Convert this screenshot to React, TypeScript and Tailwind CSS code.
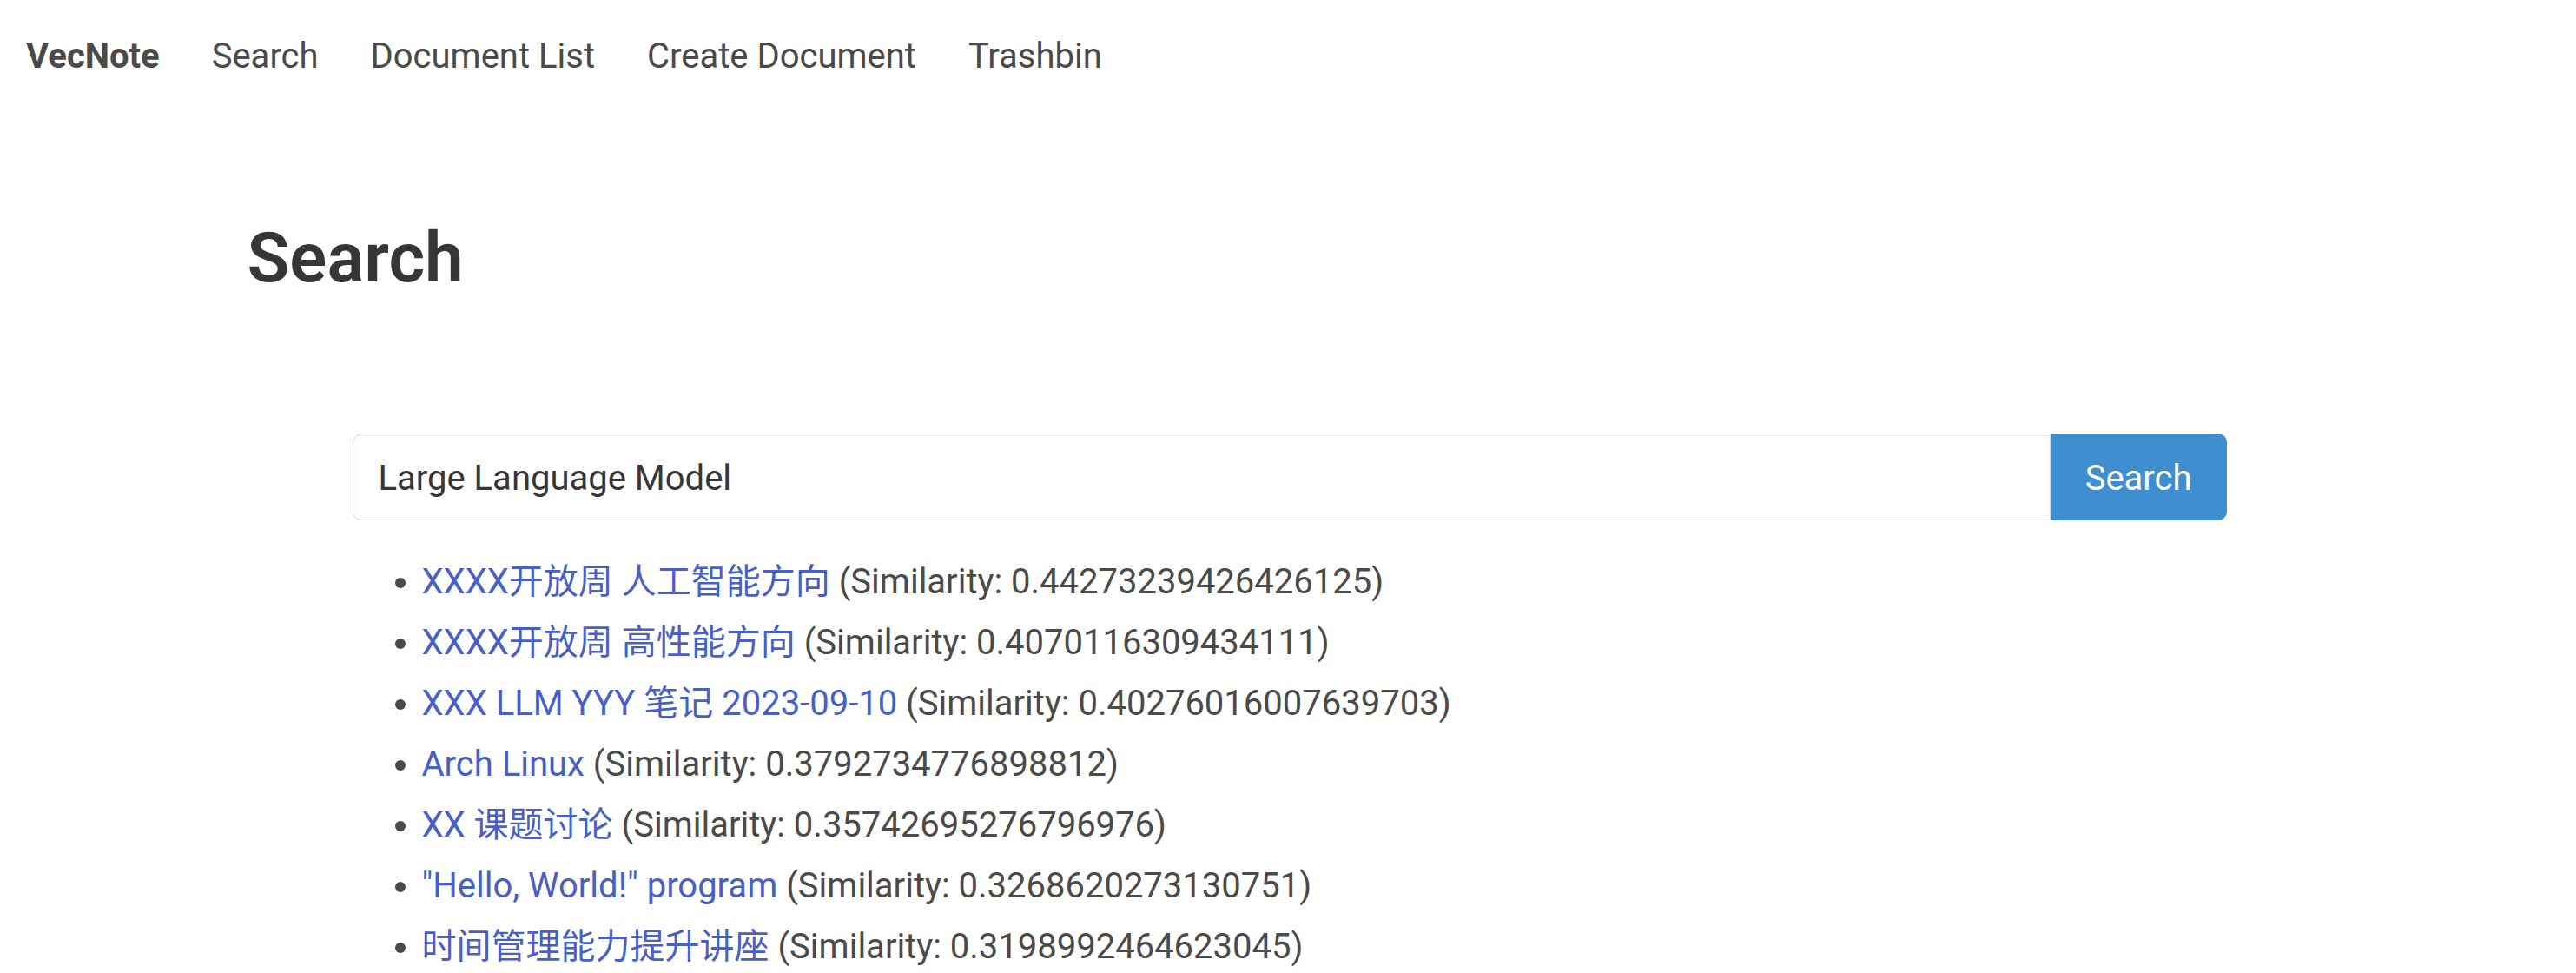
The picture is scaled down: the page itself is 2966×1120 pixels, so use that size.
import React, { useState } from "react";

type Result = { title: string; score: string };

const results: Result[] = [
  { title: "XXXX开放周 人工智能方向", score: "0.44273239426426125" },
  { title: "XXXX开放周 高性能方向", score: "0.4070116309434111" },
  { title: "XXX LLM YYY 笔记 2023-09-10", score: "0.40276016007639703" },
  { title: "Arch Linux", score: "0.3792734776898812" },
  { title: "XX 课题讨论", score: "0.35742695276796976" },
  { title: "\"Hello, World!\" program", score: "0.3268620273130751" },
  { title: "时间管理能力提升讲座", score: "0.3198992464623045" },
];

const NavBar: React.FC = () => {
  const links = ["Search", "Document List", "Create Document", "Trashbin"];
  return (
    <nav className="flex h-[130px] items-stretch text-[40px] text-[#4a4a4a]">
      <a href="#" className="flex items-center px-[30px] font-bold">
        VecNote
      </a>
      {links.map((l) => (
        <a key={l} href="#" className="flex items-center px-[30px]">
          {l}
        </a>
      ))}
    </nav>
  );
};

const App: React.FC = () => {
  const [query, setQuery] = useState<string>("Large Language Model");

  return (
    <div
      className="min-h-[1120px] bg-white text-[40px] leading-[1.5] text-[#4a4a4a]"
      style={{ fontFamily: 'Roboto, "Noto Sans CJK SC", sans-serif' }}
    >
      <NavBar />
      <section className="pl-[3px] pt-[122px]">
        <div className="mx-auto w-[2400px]">
          <h1 className="text-[80px] font-semibold leading-[1.125] text-[#363636]">Search</h1>
          <div className="mx-auto mt-[157px] w-[2158px]">
            <div className="flex h-[100px]">
              <input
                value={query}
                onChange={(e) => setQuery(e.target.value)}
                className="h-full flex-1 rounded-l-[10px] border border-[#dbdbdb] bg-white px-[29px] pt-[3px] text-[40px] text-[#363636] shadow-[inset_0_2.5px_5px_rgba(10,10,10,0.05)] outline-none"
              />
              <button className="h-full rounded-r-[10px] border border-transparent bg-[#3e8ed0] px-[39px] pt-[3px] text-[40px] text-white">
                Search
              </button>
            </div>
            <ul className="ml-[80px] mt-[41px] list-disc">
              {results.map((r, i) => (
                <li key={i} className={i > 0 ? "mt-[10px]" : ""}>
                  <a href="#" className="text-[#485fc7]">
                    {r.title}
                  </a>{" "}
                  (Similarity: {r.score})
                </li>
              ))}
            </ul>
          </div>
        </div>
      </section>
    </div>
  );
};

export default App;
